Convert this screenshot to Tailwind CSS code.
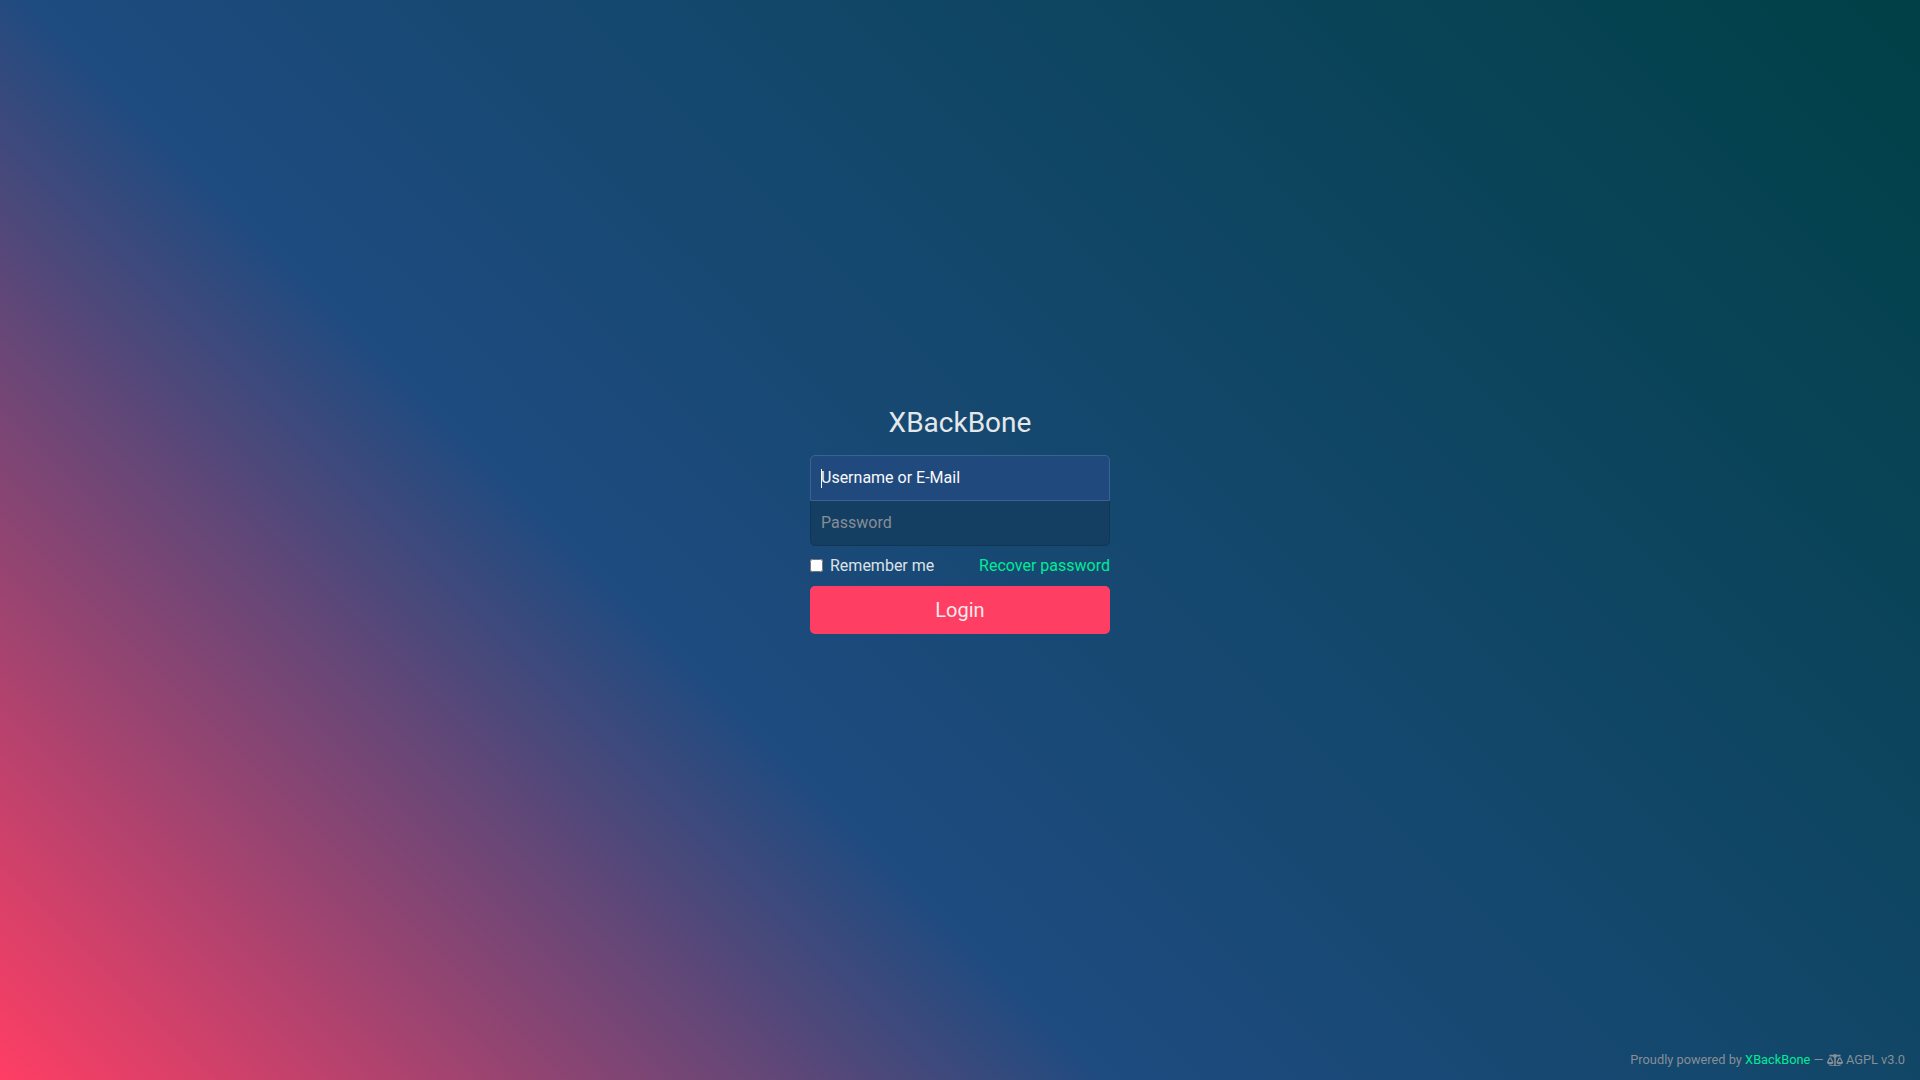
<!DOCTYPE html>
<html lang="en">
<head>
<meta charset="utf-8">
<title>XBackBone</title>
<script src="https://cdn.jsdelivr.net/npm/@tailwindcss/browser@4"></script>
</head>
<body class="font-[Roboto,sans-serif] text-[#dee2e6]">
<div class="h-screen flex flex-col overflow-hidden bg-[linear-gradient(45deg,#ff3e64_0%,#1e4b80_37%,#004046_100%)]">
  <main class="flex-1 flex items-center justify-center">
    <form class="w-[300px] flex flex-col">
      <h1 class="text-[28px] leading-[36px] font-normal text-center text-[#e4e8eb] mb-[14px]">XBackBone</h1>
      <div class="relative">
        <input type="text" placeholder="Username or E-Mail" class="block h-[46px] pb-[2px] w-full px-[10px] text-[16px] rounded-t-[5px] border border-[#3a6292] bg-[#204a7e] text-white outline-none placeholder:text-[#f8f9fa]">
        <span class="absolute left-[11px] top-[14px] w-px h-[19px] bg-white"></span>
      </div>
      <input type="password" placeholder="Password" class="h-[46px] pb-[1px] -mt-px w-full px-[10px] text-[16px] rounded-b-[5px] border border-[#113655] bg-[#143e62] text-white outline-none placeholder:text-[#868e96]">
      <div class="flex items-center justify-between mt-[8px] mb-[8px] h-[24px]">
        <label class="flex items-center text-[16px]"><input type="checkbox" class="w-[13px] h-[13px] m-0 mr-[7px] -mt-[2px]">Remember me</label>
        <a href="#" class="text-[16px] text-[#00eb96]">Recover password</a>
      </div>
      <button type="button" class="h-[48px] w-full rounded-[5px] bg-[#ff3e64] text-[20px] text-[#f8e9ec]">Login</button>
    </form>
  </main>
  <footer class="flex items-center justify-end h-[41px] pt-[1px] pr-[15px] text-[12.8px] text-[#868e96]">
    <span>Proudly powered by <a href="#" class="text-[#00eb96]">XBackBone</a> — <svg class="inline w-[16px] h-[12.8px] align-[-2px] fill-current" viewBox="0 0 640 512"><path d="M256 336h-.02c0-16.18 1.34-8.73-85.05-181.51-17.65-35.29-68.19-35.36-85.87 0C-2.06 328.75.02 320.33.02 336H0c0 44.18 57.31 80 128 80s128-35.82 128-80zM128 176l72 144H56l72-144zm511.98 160c0-16.18 1.34-8.73-85.05-181.51-17.65-35.29-68.19-35.36-85.87 0-87.12 174.26-85.04 165.84-85.04 181.51H384c0 44.18 57.31 80 128 80s128-35.82 128-80h-.02zM440 320l72-144 72 144H440zm88 128H352V153.25c23.51-10.29 41.16-31.48 46.39-57.25H528c8.84 0 16-7.16 16-16V48c0-8.84-7.16-16-16-16H383.64C369.04 12.68 346.09 0 320 0s-49.04 12.68-63.64 32H112c-8.84 0-16 7.16-16 16v32c0 8.84 7.16 16 16 16h129.61c5.23 25.76 22.87 46.96 46.39 57.25V448H112c-8.84 0-16 7.16-16 16v32c0 8.84 7.16 16 16 16h416c8.84 0 16-7.16 16-16v-32c0-8.84-7.16-16-16-16z"/></svg> AGPL v3.0</span>
  </footer>
</div>
</body>
</html>
